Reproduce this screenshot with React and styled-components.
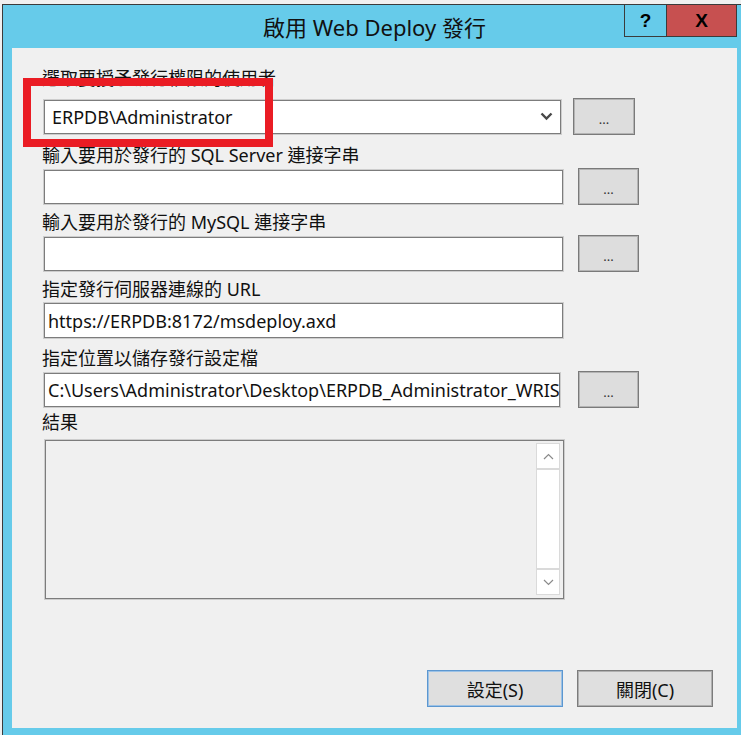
import React from "react";
import styled, { createGlobalStyle } from "styled-components";

const GlobalStyle = createGlobalStyle`
  html, body {
    margin: 0;
    padding: 0;
    background: #f0f0f0;
    overflow: hidden;
  }
  body {
    font-family: "Noto Sans", "Noto Sans CJK TC", sans-serif;
  }
`;

const Screen = styled.div`
  width: 741px;
  height: 735px;
  overflow: hidden;
  padding: 4px 0 0 2px;
  box-sizing: border-box;
`;

const Window = styled.div`
  width: 743px;
  height: 740px;
  box-sizing: border-box;
  background: #66cbea;
  border-top: 1px solid #3b3b3b;
  border-left: 1px solid #3b3b3b;
  padding: 0 8px 0 9px;
  display: flex;
  flex-direction: column;
`;

const TitleBar = styled.div`
  height: 43px;
  flex-shrink: 0;
  display: grid;
  grid-template-columns: 1fr auto 1fr;
  align-items: start;
`;

const Title = styled.div`
  grid-column: 2;
  align-self: center;
  padding-bottom: 2px;
  font-size: 22px;
  color: #111;
  white-space: nowrap;
`;

const Caption = styled.div`
  grid-column: 3;
  justify-self: end;
  display: flex;
  margin-top: -1px;
  border: 1px solid #3b3b3b;
`;

const CaptionButton = styled.div`
  width: ${(p) => p.$w}px;
  height: 31px;
  display: flex;
  align-items: center;
  justify-content: center;
  background: ${(p) => p.$bg};
  border-left: ${(p) => (p.$divider ? "1px solid #3b3b3b" : "none")};
  font-family: "Liberation Sans", sans-serif;
  font-weight: bold;
  font-size: 19px;
  color: #000;
`;

const Content = styled.div`
  position: relative;
  height: 680px;
  flex-shrink: 0;
  background: #f0f0f0;
  padding: 20px 24px 0 30px;
  box-sizing: border-box;
  display: flex;
  flex-direction: column;
`;

const Label = styled.div`
  height: 20px;
  line-height: 20px;
  font-size: 18px;
  color: #111;
  white-space: nowrap;
  margin-top: ${(p) => p.$top || 0}px;
`;

const Row = styled.div`
  height: 37px;
  display: flex;
  align-items: center;
  padding-left: 2px;
  margin-top: ${(p) => p.$top}px;
`;

const TextBox = styled.div`
  width: ${(p) => p.$w}px;
  height: ${(p) => p.$h || 34}px;
  box-sizing: border-box;
  border: 1px solid #7c7c7c;
  box-shadow: 0 0 0 1px rgba(140, 140, 140, 0.35);
  background: #fff;
  padding-left: ${(p) => p.$pad || 3}px;
  display: flex;
  align-items: center;
  overflow: hidden;
  font-size: 18px;
  color: #111;
  white-space: nowrap;
`;

const ComboText = styled.span`
  flex: 1;
`;

const Chevron = styled.svg`
  margin-right: 7px;
  flex-shrink: 0;
`;

const Browse = styled.div`
  width: ${(p) => p.$w || 61}px;
  height: 37px;
  margin-left: ${(p) => p.$gap}px;
  box-sizing: border-box;
  border: 1px solid #7a7a7a;
  box-shadow: inset 0 0 0 1px #b4b4b4;
  background: #dddddd;
  display: flex;
  align-items: center;
  justify-content: center;
  padding-top: 4px;
  font-size: 13px;
  color: #333;
`;

const Results = styled.div`
  width: 519px;
  height: 159px;
  margin: 8px 0 0 3px;
  box-sizing: border-box;
  border: 1px solid #7c7c7c;
  box-shadow: 0 0 0 1px rgba(140, 140, 140, 0.35);
  background: #f0f0f0;
  display: flex;
  justify-content: flex-end;
  padding: 2px 3px 3px 0;
`;

const ScrollBar = styled.div`
  width: 24px;
  box-sizing: border-box;
  background: #fff;
  border: 1px solid #dadada;
  display: flex;
  flex-direction: column;
`;

const ScrollArrow = styled.div`
  height: 24px;
  display: flex;
  align-items: center;
  justify-content: center;
  border-bottom: ${(p) => (p.$up ? "2px solid #dadada" : "none")};
  border-top: ${(p) => (p.$up ? "none" : "2px solid #dadada")};
`;

const Track = styled.div`
  flex: 1;
`;

const Footer = styled.div`
  display: flex;
  justify-content: flex-end;
  gap: 14px;
  margin-top: 71px;
`;

const DialogButton = styled.div`
  width: 136px;
  height: 37px;
  box-sizing: border-box;
  border: 1px solid ${(p) => (p.$primary ? "#5c97d0" : "#7c7c7c")};
  box-shadow: inset 0 0 0 1px ${(p) => (p.$primary ? "#9cc2e6" : "#b0b0b0")};
  background: #dfdfdf;
  display: flex;
  align-items: center;
  justify-content: center;
  font-size: 18px;
  color: #111;
`;

const Highlight = styled.div`
  position: absolute;
  left: 11px;
  top: 30px;
  width: 250px;
  height: 69px;
  box-sizing: border-box;
  border: 8px solid #ea1c24;
  pointer-events: none;
`;

const fields = [
  { label: "輸入要用於發行的 SQL Server 連接字串", top: 10, w: 519, gap: 15 },
  { label: "輸入要用於發行的 MySQL 連接字串", top: 7, w: 519, gap: 15 },
  {
    label: "指定發行伺服器連線的 URL",
    top: 7,
    w: 519,
    value: "https://ERPDB:8172/msdeploy.axd",
    h: 35,
  },
  {
    label: "指定位置以儲存發行設定檔",
    top: 9,
    w: 516,
    gap: 18,
    value: "C:\\Users\\Administrator\\Desktop\\ERPDB_Administrator_WRIS",
  },
];

const App = () => {
  return (
    <Screen>
      <GlobalStyle />
      <Window>
        <TitleBar>
          <Title>啟用 Web Deploy 發行</Title>
          <Caption>
            <CaptionButton $w={41} $bg="#66cbea">
              ?
            </CaptionButton>
            <CaptionButton $w={69} $bg="#c75050" $divider>
              X
            </CaptionButton>
          </Caption>
        </TitleBar>
        <Content>
          <Label>選取要授予發行權限的使用者</Label>
          <Row $top={10}>
            <TextBox $w={517} $pad={7}>
              <ComboText>ERPDB\Administrator</ComboText>
              <Chevron width="13" height="9" viewBox="0 0 13 9">
                <polyline
                  points="1.5,1.5 6.5,6.5 11.5,1.5"
                  fill="none"
                  stroke="#484848"
                  strokeWidth="2.4"
                />
              </Chevron>
            </TextBox>
            <Browse $gap={12} $w={62}>
              ...
            </Browse>
          </Row>
          {fields.map((f) => (
            <React.Fragment key={f.label}>
              <Label $top={f.top}>{f.label}</Label>
              <Row $top={3}>
                <TextBox $w={f.w} $h={f.h}>
                  {f.value}
                </TextBox>
                {f.gap && <Browse $gap={f.gap}>...</Browse>}
              </Row>
            </React.Fragment>
          ))}
          <Label $top={4}>結果</Label>
          <Results>
            <ScrollBar>
              <ScrollArrow $up>
                <svg width="11" height="7" viewBox="0 0 11 7">
                  <polyline
                    points="1,6 5.5,1.5 10,6"
                    fill="none"
                    stroke="#8a8a8a"
                    strokeWidth="1.2"
                  />
                </svg>
              </ScrollArrow>
              <Track />
              <ScrollArrow>
                <svg width="11" height="7" viewBox="0 0 11 7">
                  <polyline
                    points="1,1 5.5,5.5 10,1"
                    fill="none"
                    stroke="#8a8a8a"
                    strokeWidth="1.2"
                  />
                </svg>
              </ScrollArrow>
            </ScrollBar>
          </Results>
          <Footer>
            <DialogButton $primary>設定(S)</DialogButton>
            <DialogButton>關閉(C)</DialogButton>
          </Footer>
          <Highlight />
        </Content>
      </Window>
    </Screen>
  );
};

export default App;
